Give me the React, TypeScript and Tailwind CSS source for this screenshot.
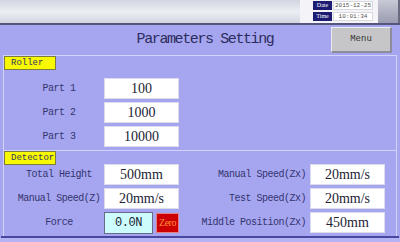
import React from "react";

const mono = { fontFamily: '"Liberation Mono", "DejaVu Sans Mono", monospace' };
const serif = { fontFamily: '"Liberation Serif", "DejaVu Serif", serif' };

const ValueBox = ({ value, w = "w-[75px]", bg = "bg-white" }: { value: string; w?: string; bg?: string }) => (
  <div
    className={`${w} h-[21px] ${bg} border border-[#dcdcec] flex items-center justify-center text-[14px] text-[#222233] leading-none`}
    style={serif}
  >
    {value}
  </div>
);

const SectionTag = ({ text }: { text: string }) => (
  <div
    className="w-[52px] h-[14px] bg-[#f8f800] border border-[#7c7c3c] flex items-center pl-[6px] text-[9px] text-[#333366] leading-none"
    style={mono}
  >
    {text}
  </div>
);

const LeftRow = ({ label, children }: { label: string; children: React.ReactNode }) => (
  <div className="flex items-center h-[21px]">
    <div className="w-[90px] text-center text-[10px] tracking-[-0.5px] text-[#34346e] whitespace-nowrap" style={mono}>
      {label}
    </div>
    {children}
  </div>
);

const RightRow = ({ label, value }: { label: string; value: string }) => (
  <div className="flex items-center justify-end h-[21px]">
    <div className="text-[10px] tracking-[-0.5px] text-[#34346e] whitespace-nowrap mr-[4px]" style={mono}>
      {label}
    </div>
    <ValueBox value={value} />
  </div>
);

const App = () => {
  return (
    <div className="w-[400px] h-[242px] bg-[#a6a6f0] overflow-hidden flex flex-col">
      {/* top status bar */}
      <div className="h-[25px] flex bg-gradient-to-b from-[#d2d4e0] via-[#eceef4] to-[#d4d6e2] border-b-2 border-[#56567c]">
        <div className="flex-1" />
        <div className="w-[78px] bg-[#f4f4f8] flex flex-col gap-[2px] pt-[1px] pl-[13px]">
          {[
            ["Date", "2015-12-25"],
            ["Time", "10:01:34"],
          ].map(([k, v]) => (
            <div key={k} className="flex h-[9px] gap-[1px]">
              <div className="w-[19px] bg-[#1c1c72] text-white text-[6px] leading-[9px] text-center" style={serif}>
                {k}
              </div>
              <div className="w-[40px] bg-white border border-[#d8d8e0] text-[#555] text-[6px] leading-[7px] text-center" style={mono}>
                {v}
              </div>
            </div>
          ))}
        </div>
        <div className="w-[22px] bg-gradient-to-b from-[#c8cad6] to-[#9a9cb0] border-r-2 border-[#6a6a80]" />
      </div>

      {/* header */}
      <div className="h-[30px] flex items-center">
        <div className="w-[79px]" />
        <div className="flex-1 text-center text-[15px] tracking-[-1.4px] text-[#2c2c5c]" style={mono}>
          Parameters Setting
        </div>
        <div
          className="w-[61px] h-[26px] mr-[8px] bg-[#c6c6c8] border-t border-l border-[#ececf0] border-b-2 border-r-2 border-b-[#8c8c9c] border-r-[#8c8c9c] flex items-center justify-center text-[9px] text-[#333] leading-none"
          style={mono}
        >
          Menu
        </div>
      </div>

      {/* roller */}
      <div className="mx-[3px] h-[95px] border-t border-l border-r border-[#d2d2fa] flex flex-col">
        <SectionTag text="Roller" />
        <div className="flex flex-col gap-[3px] mt-[8px] pl-[10px]">
          <LeftRow label="Part 1">
            <ValueBox value="100" />
          </LeftRow>
          <LeftRow label="Part 2">
            <ValueBox value="1000" />
          </LeftRow>
          <LeftRow label="Part 3">
            <ValueBox value="10000" />
          </LeftRow>
        </div>
      </div>

      {/* detector */}
      <div className="mx-[3px] h-[86px] border-t border-l border-r border-[#d2d2fa] flex flex-col">
        <SectionTag text="Detector" />
        <div className="flex mt-[-1px]">
          <div className="flex flex-col gap-[3px] pl-[10px]">
            <LeftRow label="Total Height">
              <ValueBox value="500mm" />
            </LeftRow>
            <LeftRow label="Manual Speed(Z)">
              <ValueBox value="20mm/s" />
            </LeftRow>
            <LeftRow label="Force">
              <div className="flex items-center gap-[3px]">
                <div
                  className="w-[49px] h-[22px] bg-[#ccfcfc] border border-[#6a6a8a] flex items-center justify-center text-[12px] tracking-[-0.5px] text-[#222233] leading-none"
                  style={mono}
                >
                  0.0N
                </div>
                <div
                  className="w-[23px] h-[20px] bg-[#cc0000] border border-[#e08080] flex items-center justify-center text-[10px] tracking-[-0.5px] text-[#ff8c3c] leading-none"
                  style={serif}
                >
                  Zero
                </div>
              </div>
            </LeftRow>
          </div>
          <div className="flex-1 flex flex-col gap-[3px] pr-[11px]">
            <RightRow label="Manual Speed(Zx)" value="20mm/s" />
            <RightRow label="Test Speed(Zx)" value="20mm/s" />
            <RightRow label="Middle Position(Zx)" value="450mm" />
          </div>
        </div>
      </div>

      {/* bottom edge */}
      <div className="mx-[1px] h-[2px] bg-[#4848a0]" />
      <div className="flex-1 bg-[#b4b4f4]" />
    </div>
  );
};

export default App;
